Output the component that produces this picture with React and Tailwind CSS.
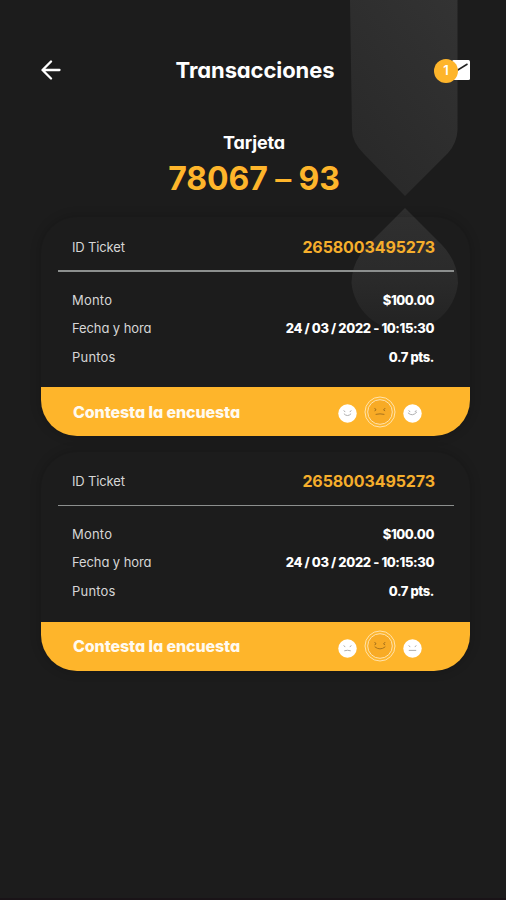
import React from 'react';

const tickets = [
  {
    id: '2658003495273',
    amount: '$100.00',
    date: '24 / 03 / 2022 - 10:15:30',
    points: '0.7 pts.',
    faces: ['smile', 'sad', 'grin'],
  },
  {
    id: '2658003495273',
    amount: '$100.00',
    date: '24 / 03 / 2022 - 10:15:30',
    points: '0.7 pts.',
    faces: ['sad', 'smile', 'flat'],
  },
];

// Mouth shapes, drawn in a 20x20 box
const mouths = {
  smile: 'M6.5 10.5q3.5 3.6 7 0',
  grin: 'M5.5 9.5q4.5 4.4 9 -1',
  sad: 'M7 12.3q3 -1 6 0',
  flat: 'M6.5 12h7',
};

function Face({ mood }) {
  return (
    <svg viewBox="0 0 20 20" className="size-[19px]">
      <circle cx="10" cy="10" r="9.7" fill="#fff" />
      <g stroke="#a9a9a9" strokeWidth="1" fill="none" strokeLinecap="round">
        <path d="M6.3 7l1 1.2M13.7 7l-1 1.2" />
        <path d={mouths[mood]} />
      </g>
    </svg>
  );
}

function MainFace({ mood }) {
  return (
    <svg viewBox="0 0 32 32" className="size-8">
      <circle cx="16" cy="16" r="15" fill="none" stroke="#ffe3ae" strokeWidth="1" />
      <circle cx="16" cy="16" r="12.3" fill="#f8ab26" stroke="#ffe3ae" strokeWidth="1" />
      <g stroke="#a8731c" strokeWidth="1" fill="none" strokeLinecap="round">
        <path d="M10.8 12.3l1.3 1.7l-1.300 .7M21 12.3l-1.500 1.700l1.300 .7" />
        <path d={mood === 'sad' ? 'M12 18.3q4 -1 8 0' : 'M11 17q5 4 10 0'} />
      </g>
    </svg>
  );
}

function Row({ label, value, className, labelClass, valueClass }) {
  return (
    <div className={`flex items-center justify-between pr-9 pl-[31px] ${className}`}>
      <span className={`text-[13px] text-[#d6d6d6] ${labelClass}`}>{label}</span>
      <span className={`text-[13px] font-extrabold text-white ${valueClass}`}>{value}</span>
    </div>
  );
}

function TicketCard({ ticket }) {
  return (
    <section className="flex h-[219px] flex-col overflow-hidden rounded-[36px] shadow-[0_0_9px_3px_rgba(0,0,0,0.13)]">
      <div className="flex h-[53px] items-center justify-between pt-[7px] pr-[35px] pl-[31px]">
        <span className="pt-px text-[13px] tracking-[-0.15px] text-[#d6d6d6]">ID Ticket</span>
        <span className="pb-px text-[16px] font-bold tracking-[-0.1px] text-[#f5ae2c]">{ticket.id}</span>
      </div>
      <div className="mr-4 ml-[17px] h-[1.5px] bg-[#8c8f8e]" />
      <Row label="Monto" value={ticket.amount} className="mt-[15px] h-7" labelClass="tracking-[0.2px]" valueClass="tracking-[-0.4px]" />
      <Row label="Fecha y hora" value={ticket.date} className="h-7" labelClass="tracking-[-0.1px]" valueClass="tracking-[-0.38px]" />
      <Row label="Puntos" value={ticket.points} className="h-[30px]" labelClass="tracking-[0.2px]" valueClass="tracking-[-0.4px]" />
      <div className="mt-auto flex h-[49px] items-center justify-between bg-[#feb52b] pr-[48px] pl-8">
        <span className="text-[16px] font-extrabold tracking-[-0.1px] text-[#fffaf0]">Contesta la encuesta</span>
        <span className="flex items-center gap-[7px]">
          <span className="mt-1"><Face mood={ticket.faces[0]} /></span>
          <MainFace mood={ticket.faces[1]} />
          <span className="mt-1"><Face mood={ticket.faces[2]} /></span>
        </span>
      </div>
    </section>
  );
}

function Backdrop() {
  return (
    <svg viewBox="0 0 506 340" className="absolute top-0 left-0 h-[340px] w-[506px]">
      <defs>
        <linearGradient id="pen" x1="1" y1="0" x2="0.3" y2="1">
          <stop offset="0" stopColor="#333333" />
          <stop offset="1" stopColor="#292929" />
        </linearGradient>
        <linearGradient id="drop" x1="0" y1="0" x2="0" y2="1">
          <stop offset="0" stopColor="#303030" />
          <stop offset="0.6" stopColor="#2a2a2a" />
          <stop offset="1" stopColor="#222222" />
        </linearGradient>
      </defs>
      <path d="M350 0H457.5V130Q457 143 448 153L405 196L364 154Q352 142 352 130Z" fill="url(#pen)" />
      <path d="M405 208L442 245Q458 262 458 283A53.5 53 0 0 1 351.5 283Q351.5 262 368 245Z" fill="url(#drop)" />
    </svg>
  );
}

function App() {
  return (
    <div className="relative h-[900px] w-[506px] overflow-hidden border-b-2 border-[#191317] bg-[#1c1c1c] font-['Inter','Liberation_Sans',sans-serif] whitespace-nowrap [font-feature-settings:'cv11']">
      <Backdrop />
      <div className="relative flex flex-col">
        <header className="mt-10 flex h-[60px] items-center justify-between pr-9 pl-[41px]">
          <button className="w-[35px]" aria-label="Volver">
            <svg viewBox="0 0 20 20" className="h-5 w-5" fill="none" stroke="#fff" strokeWidth="2.3" strokeLinecap="round" strokeLinejoin="round">
              <path d="M10 1.5L1.5 10L10 18.500M2 10H18.500" />
            </svg>
          </button>
          <h1 className="text-[22px] font-bold tracking-[-0.1px] text-white">Transacciones</h1>
          <div className="flex items-center">
            <span className="z-10 mt-0.5 flex size-6 items-center justify-center rounded-full bg-[#feb52b] text-[13px] font-semibold text-white">1</span>
            <svg viewBox="0 0 18 20" className="-ml-[6px] h-5 w-[18px]">
              <rect width="18" height="20" rx="1.5" fill="#fff" />
              <path d="M5 10.5L15.5 4" stroke="#222" strokeWidth="1.5" />
            </svg>
          </div>
        </header>

        <div className="mt-[30px] flex flex-col items-center pl-[2px]">
          <p className="h-[26px] text-[18px] leading-[26px] font-bold tracking-[-0.1px] text-white">Tarjeta</p>
          <p className="mt-[1px] h-10 text-[32px] leading-[43px] font-bold tracking-[-0.1px] text-[#feb52b]">
            78067 <span className="font-medium">–</span> 93
          </p>
        </div>

        <main className="mt-5 flex flex-col gap-[15.5px] pr-9 pl-[41px]">
          {tickets.map((ticket, i) => (
            <TicketCard key={i} ticket={ticket} />
          ))}
        </main>
      </div>
    </div>
  );
}

export default App;
